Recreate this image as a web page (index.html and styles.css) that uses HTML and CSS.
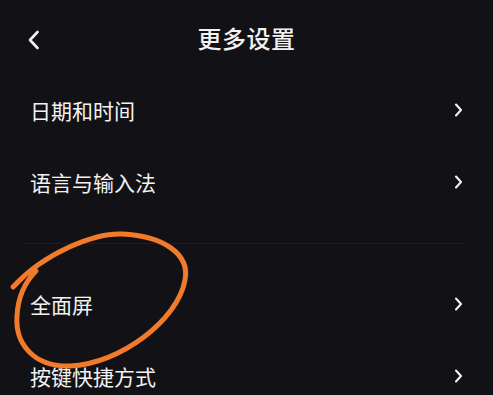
FILE: index.html
```html
<!DOCTYPE html>
<html lang="zh-CN">
<head>
<meta charset="utf-8">
<title>更多设置</title>
<link rel="stylesheet" href="styles.css">
</head>
<body>
<div class="screen">
  <header class="header">
    <div class="back">
      <svg width="13" height="20" viewBox="0 0 13 20"><path d="M10.5 2 L3 10 L10.5 18" fill="none" stroke="#f2f2f2" stroke-width="2.6" stroke-linecap="round" stroke-linejoin="round"/></svg>
    </div>
    <h1 class="title">更多设置</h1>
    <div></div>
  </header>
  <ul class="group">
    <li class="row"><span>日期和时间</span><svg class="chev" width="9" height="14" viewBox="0 0 9 14"><path d="M2 1.5 L7 7 L2 12.5" fill="none" stroke="#f2f2f2" stroke-width="2.1" stroke-linecap="round" stroke-linejoin="round"/></svg></li>
    <li class="row"><span>语言与输入法</span><svg class="chev" width="9" height="14" viewBox="0 0 9 14"><path d="M2 1.5 L7 7 L2 12.5" fill="none" stroke="#f2f2f2" stroke-width="2.1" stroke-linecap="round" stroke-linejoin="round"/></svg></li>
  </ul>
  <div class="divider"></div>
  <ul class="group group-second">
    <li class="row"><span>全面屏</span><svg class="chev" width="9" height="14" viewBox="0 0 9 14"><path d="M2 1.5 L7 7 L2 12.5" fill="none" stroke="#f2f2f2" stroke-width="2.1" stroke-linecap="round" stroke-linejoin="round"/></svg></li>
    <li class="row"><span>按键快捷方式</span><svg class="chev" width="9" height="14" viewBox="0 0 9 14"><path d="M2 1.5 L7 7 L2 12.5" fill="none" stroke="#f2f2f2" stroke-width="2.1" stroke-linecap="round" stroke-linejoin="round"/></svg></li>
  </ul>
  <svg class="scribble" width="493" height="395" viewBox="0 0 493 395">
    <path d="M13 287 C45 252, 95 233, 122 234 C165 236, 190 255, 185 280 C178 320, 120 364, 70 366 C32 367, 15 342, 17 316 C18 296, 25 282, 36 271" fill="none" stroke="#f27a2b" stroke-width="5" stroke-linecap="round" stroke-linejoin="round"/>
  </svg>
</div>
</body>
</html>
```
FILE: styles.css
```css
html, body {
  margin: 0;
  padding: 0;
  background: #121115;
}
.screen {
  position: relative;
  width: 493px;
  height: 395px;
  overflow: hidden;
  background: #121115;
  color: #f2f2f2;
  font-family: "Noto Sans CJK SC", "Noto Sans", sans-serif;
}
.header {
  height: 72px;
  padding-top: 2px;
  display: grid;
  grid-template-columns: 1fr auto 1fr;
  align-items: center;
}
.back {
  padding-left: 27px;
  padding-top: 3px;
  display: flex;
  align-items: center;
}
.title {
  margin: 0;
  font-size: 24px;
  font-weight: 500;
  line-height: 1;
  letter-spacing: 0.5px;
}
.group {
  list-style: none;
  margin: 0;
  padding: 0;
}
.row {
  height: 72px;
  padding: 0 30px 0 30px;
  display: flex;
  align-items: center;
  justify-content: space-between;
  font-size: 21px;
  line-height: 1;
}
.divider {
  margin: 25px 30px 0 25px;
  height: 1px;
  background: #1f1e23;
}
.group-second {
  margin-top: 24px;
}
.scribble {
  position: absolute;
  left: 0;
  top: 0;
  pointer-events: none;
}
```
